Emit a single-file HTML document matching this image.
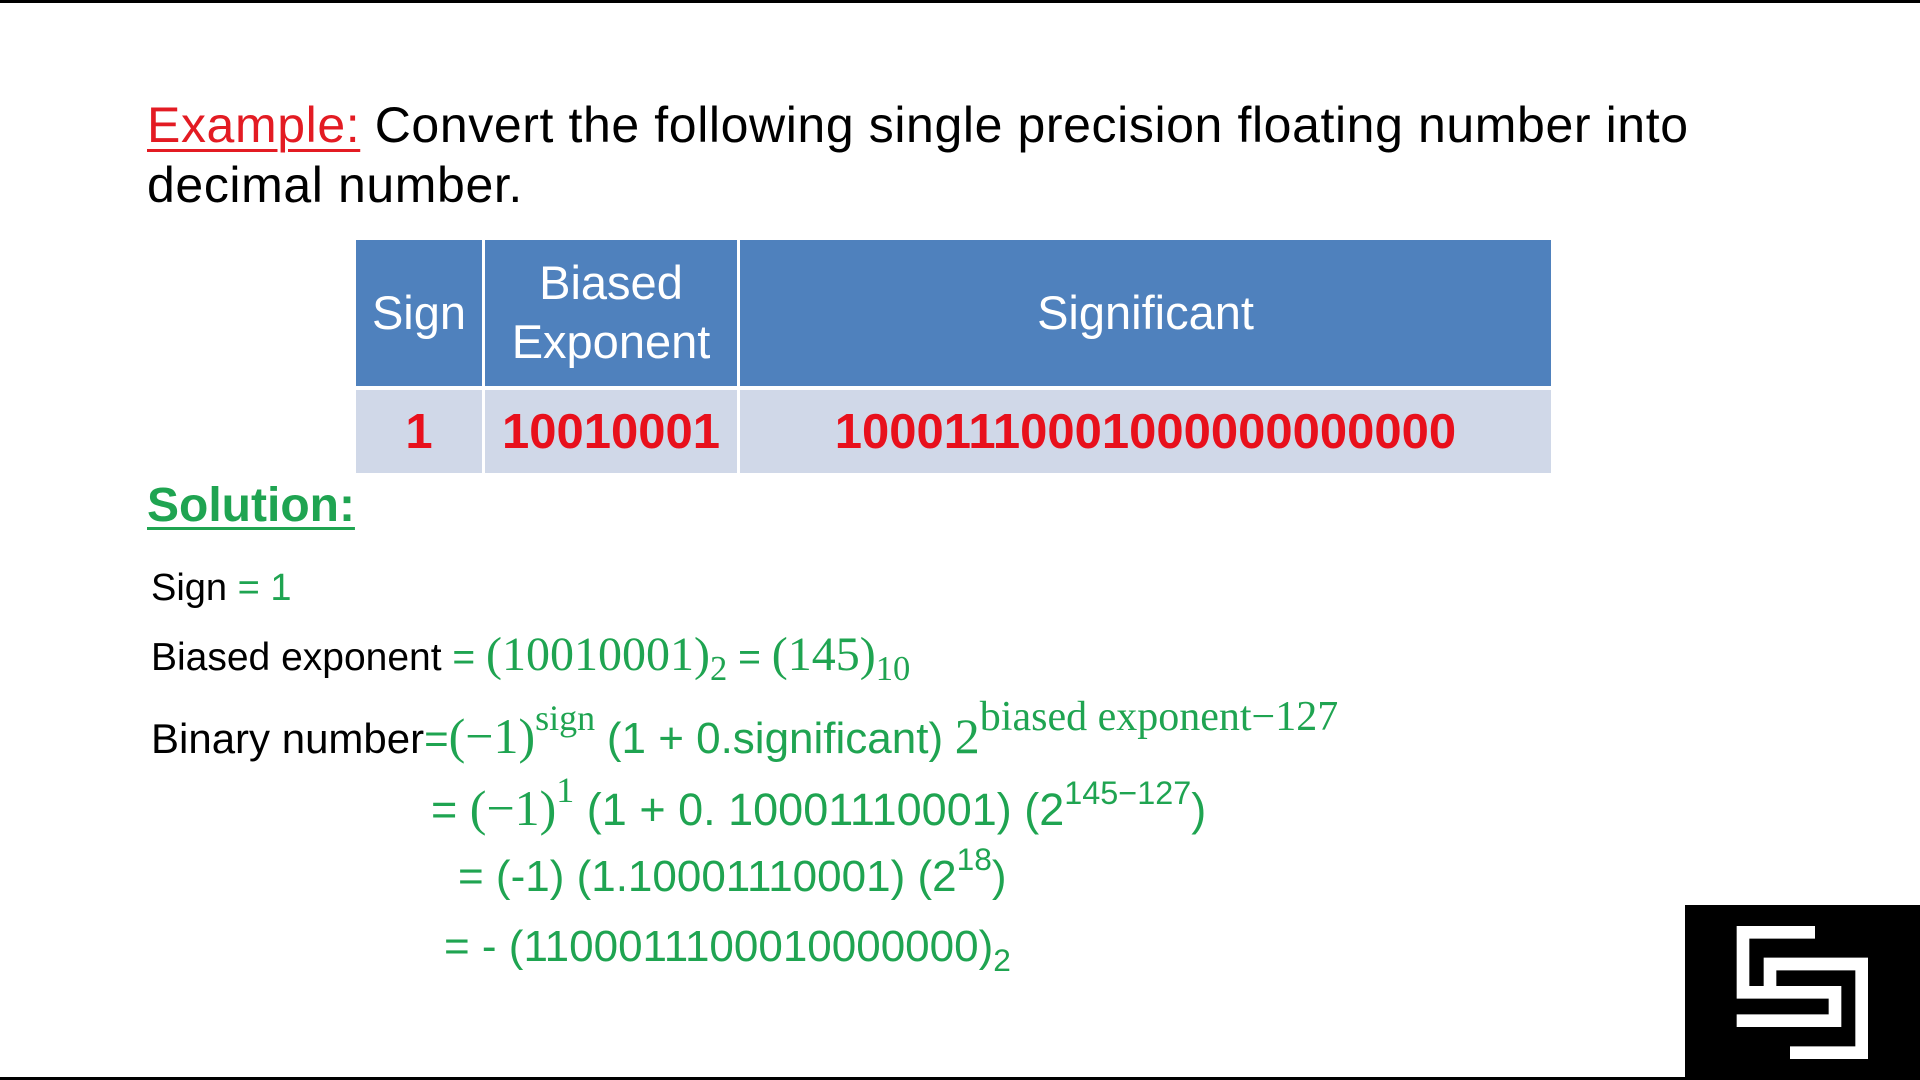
<!DOCTYPE html>
<html><head><meta charset="utf-8"><style>
html,body{margin:0;padding:0;}
body{width:1920px;height:1080px;position:relative;background:#fff;overflow:hidden;font-family:"Liberation Sans",sans-serif;}
.a{position:absolute;white-space:nowrap;line-height:1;}
.g{color:#1fa451;}
.m{font-family:"Liberation Serif",serif;}
sup,sub{font-size:72%;line-height:0;position:relative;vertical-align:baseline;}
sup{top:-0.65em;} sub{top:0.3em;}
.cell{position:absolute;display:flex;align-items:center;justify-content:center;text-align:center;}
.h{background:#4f81bd;color:#fff;font-size:47px;line-height:1.25;}
.r{background:#d0d8e8;color:#e8101c;font-weight:bold;font-size:49px;}
</style></head><body>
<div style="position:absolute;left:0;top:0;width:1920px;height:3px;background:#000"></div>
<div style="position:absolute;left:0;top:1077px;width:1920px;height:3px;background:#000"></div>

<div class="a" style="left:147px;top:100px;font-size:50px;letter-spacing:0.6px;"><span style="color:#e31b23;text-decoration:underline;text-decoration-thickness:3px;text-underline-offset:7px;">Example:</span> Convert the following single precision floating number into</div>
<div class="a" style="left:147px;top:160px;font-size:50px;letter-spacing:0.6px;">decimal number.</div>

<div class="cell h" style="left:356px;top:240px;width:126px;height:146px;">Sign</div>
<div class="cell h" style="left:485px;top:240px;width:252px;height:146px;">Biased<br>Exponent</div>
<div class="cell h" style="left:740px;top:240px;width:811px;height:146px;">Significant</div>
<div class="cell r" style="left:356px;top:390px;width:126px;height:83px;">1</div>
<div class="cell r" style="left:485px;top:390px;width:252px;height:83px;">10010001</div>
<div class="cell r" style="left:740px;top:390px;width:811px;height:83px;">10001110001000000000000</div>

<div class="a g" style="left:147px;top:482px;font-size:48px;font-weight:bold;text-decoration:underline;text-decoration-thickness:3px;text-underline-offset:6px;">Solution:</div>

<div class="a" style="left:151px;top:569px;font-size:38px;">Sign <span class="g">= 1</span></div>
<div class="a" style="left:151px;top:631px;font-size:39px;">Biased exponent <span class="g">= <span class="m" style="font-size:48px">(10010001)<sub>2</sub></span> = <span class="m" style="font-size:48px">(145)<sub>10</sub></span></span></div>
<div class="a" style="left:151px;top:711px;font-size:42px;">Binary number<span class="g">=<span class="m" style="font-size:50px">(−1)<sup>sign</sup></span> <span style="font-size:44px">(1 + 0.significant)</span> <span class="m" style="font-size:50px">2<sup style="font-size:84%;top:-0.55em">biased exponent−127</sup></span></span></div>
<div class="a g" style="left:431px;top:783px;font-size:45px;">= <span class="m" style="font-size:50px">(−1)<sup>1</sup></span> (1 + 0. 10001110001) (2<sup>145−127</sup>)</div>
<div class="a g" style="left:458px;top:855px;font-size:44px;">= (-1) (1.10001110001) (2<sup>18</sup>)</div>
<div class="a g" style="left:444px;top:925px;font-size:44px;">= - (1100011100010000000)<sub>2</sub></div>

<svg style="position:absolute;left:1680px;top:890px;" width="240" height="190" viewBox="0 0 720 570">
<rect x="15" y="45" width="705" height="525" fill="#000"/>
<g fill="none" stroke="#fff" stroke-width="38" stroke-linecap="butt" stroke-linejoin="miter">
<path d="M405,127 H189 V307 H465 V392 H170"/>
<path d="M270,290 V222 H545 V488 H330"/>
</g>
</svg>
</body></html>
